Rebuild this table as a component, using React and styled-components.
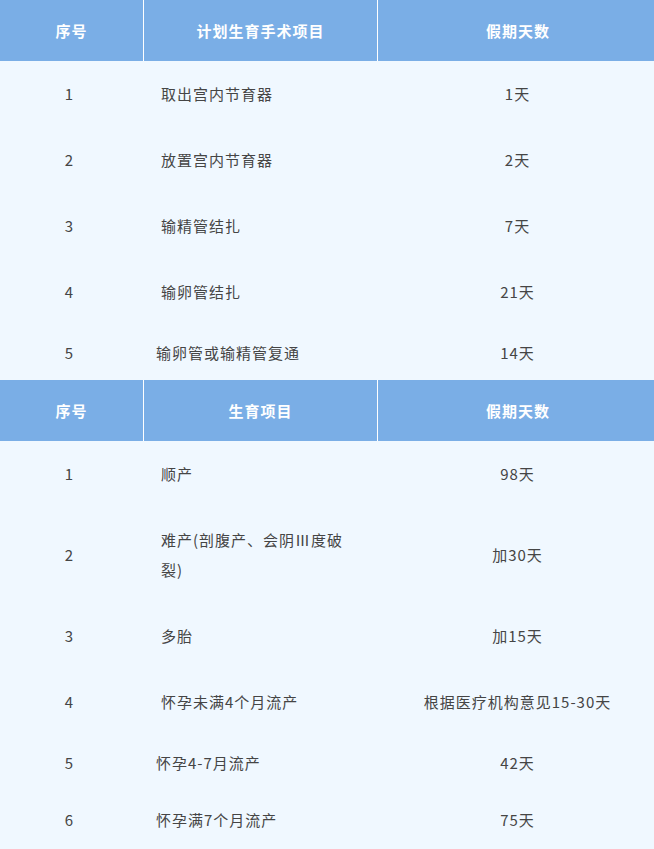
import React from 'react'
import styled, { createGlobalStyle } from 'styled-components'

const GlobalStyle = createGlobalStyle`
  html, body {
    margin: 0;
    padding: 0;
    background: #f0f8ff;
  }
  body {
    font-family: "Noto Sans CJK SC", "Noto Sans", sans-serif;
  }
`

const Wrap = styled.div`
  width: 654px;
  background: #f0f8ff;
`

const Table = styled.div`
  display: grid;
  grid-template-columns: 143px 234px 1fr;
`

const HeadCell = styled.div`
  height: 61px;
  display: flex;
  align-items: center;
  justify-content: center;
  padding-left: ${({ shift }) => shift || 0}px;
  background: #7aaee6;
  color: #ffffff;
  font-size: 15px;
  font-weight: 700;
  letter-spacing: 1px;
  border-left: ${({ first }) => (first ? 'none' : '1px solid #ffffff')};
  box-sizing: border-box;
`

const Cell = styled.div`
  height: ${({ h }) => h}px;
  display: flex;
  align-items: center;
  justify-content: ${({ left }) => (left ? 'flex-start' : 'center')};
  padding: ${({ left, indent }) => (left ? `0 20px 0 ${indent ? 18 : 13}px` : '0')};
  padding-left: ${({ shift }) => (shift ? `${shift}px` : undefined)};
  box-sizing: border-box;
  color: #454545;
  font-size: 15px;
  line-height: 30px;
  letter-spacing: 1px;
`

const NumCell = styled(Cell)`
  padding-right: 4px;
`

const table1 = [
  ['1', '取出宫内节育器', '1天', 66, true],
  ['2', '放置宫内节育器', '2天', 66, true],
  ['3', '输精管结扎', '7天', 66, true],
  ['4', '输卵管结扎', '21天', 66, true],
  ['5', '输卵管或输精管复通', '14天', 55, false],
]

const table2 = [
  ['1', '顺产', '98天', 66, true],
  ['2', '难产(剖腹产、会阴Ⅲ度破裂)', '加30天', 96, true],
  ['3', '多胎', '加15天', 66, true],
  ['4', '怀孕未满4个月流产', '根据医疗机构意见15-30天', 66, true],
  ['5', '怀孕4-7月流产', '42天', 56, false],
  ['6', '怀孕满7个月流产', '75天', 58, false],
]

const LeaveTable = ({ title, rows }) => (
  <Table>
    <HeadCell first>序号</HeadCell>
    <HeadCell>{title}</HeadCell>
    <HeadCell shift={4}>假期天数</HeadCell>
    {rows.map(([no, name, days, h, indent]) => (
      <React.Fragment key={no}>
        <NumCell h={h}>{no}</NumCell>
        <Cell h={h} left indent={indent}>{name}</Cell>
        <Cell h={h} shift={4}>{days}</Cell>
      </React.Fragment>
    ))}
  </Table>
)

export default function App() {
  return (
    <Wrap>
      <GlobalStyle />
      <LeaveTable title="计划生育手术项目" rows={table1} />
      <LeaveTable title="生育项目" rows={table2} />
    </Wrap>
  )
}
